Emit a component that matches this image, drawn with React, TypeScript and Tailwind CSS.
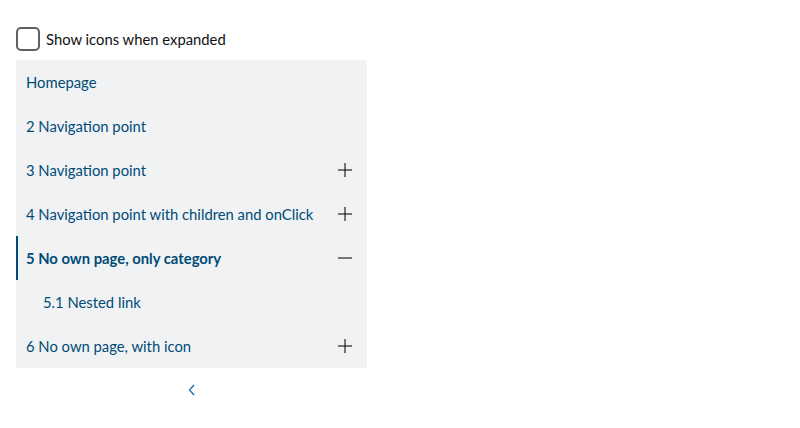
import { useState } from "react";

type NavItem = {
  label: string;
  toggle?: "plus" | "minus";
  active?: boolean;
  nested?: boolean;
};

const items: NavItem[] = [
  { label: "Homepage" },
  { label: "2 Navigation point" },
  { label: "3 Navigation point", toggle: "plus" },
  { label: "4 Navigation point with children and onClick", toggle: "plus" },
  { label: "5 No own page, only category", toggle: "minus", active: true },
  { label: "5.1 Nested link", nested: true },
  { label: "6 No own page, with icon", toggle: "plus" },
];

function ToggleIcon({ kind }: { kind: "plus" | "minus" }) {
  return (
    <svg width="16" height="16" viewBox="0 0 16 16" fill="none" stroke="#111111" strokeWidth="1.1">
      <path d="M1 8h14" />
      {kind === "plus" && <path d="M8 1v14" />}
    </svg>
  );
}

export default function App() {
  const [showIcons, setShowIcons] = useState(false);

  return (
    <div className="min-h-screen bg-white px-4 pt-[27px] font-['Lato',sans-serif] text-[14.8px]">

      <label className="flex h-6 cursor-pointer items-center gap-[6px] text-[#111111]">
        <input
          type="checkbox"
          checked={showIcons}
          onChange={(event) => setShowIcons(event.target.checked)}
          className="h-6 w-6 appearance-none rounded-[5px] border-2 border-[#5b6166] bg-white"
        />
        Show icons when expanded
      </label>

      <nav className="mt-[9px] w-[351px]">
        <ul className="bg-[#f1f2f4]">
          {items.map((item) => (
            <li
              key={item.label}
              className={
                item.active
                  ? "flex h-11 items-center justify-between border-l-2 border-[#004b76] pl-2 pr-[14px] font-bold text-[#004b76]"
                  : item.nested
                  ? "flex h-11 items-center justify-between pl-[27px] pr-[14px] text-[#004b76]"
                  : "flex h-11 items-center justify-between pl-[10px] pr-[14px] text-[#004b76]"
              }
            >
              <span>{item.label}</span>
              {item.toggle && <ToggleIcon kind={item.toggle} />}
            </li>
          ))}
        </ul>

        <div className="flex h-11 items-center justify-center">
          <svg width="8" height="12" viewBox="0 0 8 12" fill="none" stroke="#1466a8" strokeWidth="1.2">
            <path d="M6 1L1.5 6L6 11" />
          </svg>
        </div>
      </nav>

    </div>
  );
}
